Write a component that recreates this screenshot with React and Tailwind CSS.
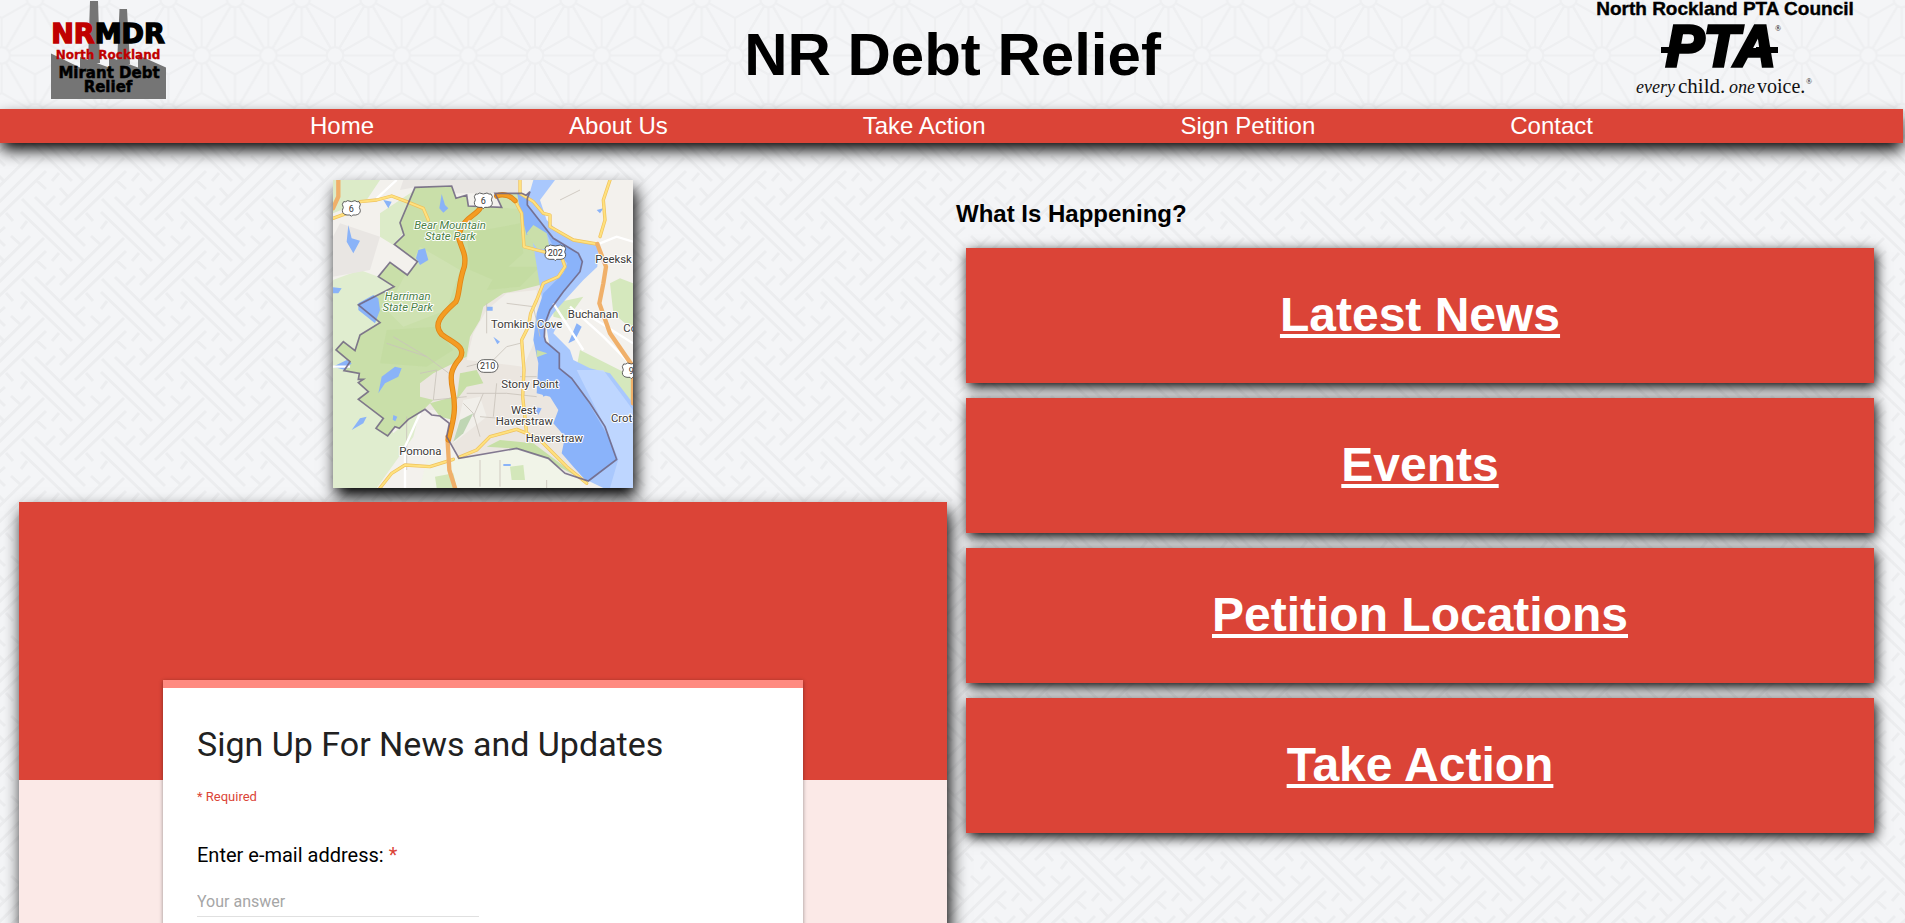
import React from "react";

const NAV_LINKS = ["Home", "About Us", "Take Action", "Sign Petition", "Contact"];
const TILES = ["Latest News", "Events", "Petition Locations", "Take Action"];

const KEY_PATH =
  "M25 17 L75 66 M36 25 L45 16 M66 55 L75 47 M12 19 L74 81 M11 32 L62 81 M17 41 L11 49 M49 73 L42 81 M50 105 L100 56 M59 98 L50 88 M90 64 L81 56 M51 120 L114 58 M65 120 L116 71 M76 113 L83 121 M107 81 L116 89";

function KeyPattern() {
  const offsets = [-80, 0];
  return (
    <svg className="absolute inset-0 -z-10 h-full w-full" aria-hidden="true">
      <defs>
        <pattern id="key" x="10" y="180" width="80" height="80" patternUnits="userSpaceOnUse">
          <g fill="none" stroke="#ecedef" strokeWidth="3">
            {offsets.map((x) =>
              offsets.map((y) => (
                <path key={`${x}/${y}`} d={KEY_PATH} transform={`translate(${x} ${y})`} />
              ))
            )}
          </g>
        </pattern>
      </defs>
      <rect width="100%" height="100%" fill="#f4f5f7" />
      <rect width="100%" height="100%" fill="url(#key)" />
    </svg>
  );
}

const STAR_PATH =
  "M0 0 H66.67 M0 0 L33.33 -56.5 M0 0 L33.33 56.5 M0 0 L-33.33 -56.5 M0 0 L-33.33 56.5 M0 0 V-38 M0 0 V38 M0 0 L33.33 -19 M0 0 L33.33 19 M0 0 L-33.33 -19 M0 0 L-33.33 19";

function StarPattern() {
  const centers = [
    [0, 56.5],
    [66.67, 56.5],
    [33.33, 0],
    [33.33, 113],
    [-33.33, 0],
    [-33.33, 113],
    [100, 0],
    [100, 113],
  ];
  return (
    <svg className="absolute inset-0 -z-10 h-full w-full" aria-hidden="true">
      <defs>
        <pattern id="star" x="1.7" y="-1" width="66.67" height="113" patternUnits="userSpaceOnUse">
          <g fill="none" stroke="#eeeff1" strokeWidth="2.2">
            {centers.map(([x, y]) => (
              <path key={`${x}/${y}`} d={STAR_PATH} transform={`translate(${x} ${y})`} />
            ))}
          </g>
          <g fill="#f4f5f7" stroke="#eeeff1" strokeWidth="2.2">
            {centers.map(([x, y]) => (
              <circle key={`${x}/${y}`} cx={x} cy={y} r="8.3" />
            ))}
          </g>
        </pattern>
      </defs>
      <rect width="100%" height="100%" fill="#f4f5f7" />
      <rect width="100%" height="100%" fill="url(#star)" />
    </svg>
  );
}

function FactoryLogo() {
  return (
    <svg
      viewBox="0 0 118 100"
      className="h-[100px] w-[118px]"
      role="img"
      aria-label="NRMDR"
      fontFamily='"DejaVu Sans", sans-serif'
      fontWeight="700"
      textAnchor="middle"
    >
      <path
        fill="#757575"
        d="M40 1h8l2 62H38z M69.500 9h7.500l3 55H67z M1 53.500L30 67.500V57L59 67.500V57L88 67.500V55L116 67.500V99H1z"
      />
      <g fontSize="27" strokeWidth="1.4">
        <text x="58" y="43">
          <tspan fill="#c00000" stroke="#c00000">NR</tspan>
          <tspan fill="#000" stroke="#000">MDR</tspan>
        </text>
      </g>
      <text x="58" y="59" fontSize="12" fill="#c00000" stroke="#c00000" strokeWidth="0.3">North Rockland</text>
      <g fill="#000" stroke="#000" strokeWidth="0.5" fontSize="15">
        <text x="59" y="78">Mirant Debt</text>
        <text x="58" y="92">Relief</text>
      </g>
    </svg>
  );
}

function PtaLogo() {
  return (
    <svg viewBox="0 0 270 100" className="h-[100px] w-[270px]" role="img" aria-label="North Rockland PTA Council">
      <text x="135" y="15" textAnchor="middle" fontFamily='"Liberation Sans", sans-serif' fontWeight="700" fontSize="19" stroke="#000" strokeWidth="0.4">
        North Rockland PTA Council
      </text>
      <text x="76" y="66" fontFamily='"Liberation Sans", sans-serif' fontWeight="700" fontStyle="italic" fontSize="57" stroke="#000" strokeWidth="3.5">
        PTA
      </text>
      <path d="M71 47h12v6H71z M166 47h22v6h-22z" />
      <g fontFamily='"Liberation Serif", serif'>
        <text x="185" y="31" fontSize="8">®</text>
        <g fill="#111">
          <text x="46" y="93" fontSize="18" fontStyle="italic">every</text>
          <text x="88" y="93" fontSize="21">child.</text>
          <text x="139" y="93" fontSize="18" fontStyle="italic">one</text>
          <text x="167" y="93" fontSize="20">voice.</text>
          <text x="216" y="84" fontSize="8">®</text>
        </g>
      </g>
    </svg>
  );
}

const BORDER =
  "M120 495L180 458L115 405L222 350L175 320L210 277L262 315L292 275L223 223L252 195L240 158L285 52L395 48L408 85L440 75L445 108L545 112L525 70L605 70L618 76L630 65L622 85V105L700 205L775 250L787 275L780 305L730 365L690 420L675 460L673 500L677 515L718 550V595L755 625L810 700L855 770L890 868L805 933L735 910L685 865L590 835L417 865L380 800L388 760L360 738L335 735L315 718L265 748L238 775L225 770L203 798L168 775L190 745L115 688L145 665L115 638L130 628H115L118 610L72 602L90 575L48 540L70 515L105 542L120 495Z";

const YELLOW_ROADS =
  "M120 95L170 90L215 78L260 95L310 115L325 150 M39 145L80 130 M585 92L605 130L612 230L650 240L690 250L725 262L735 290L715 320L670 340L650 390L632 430L625 470L605 510L612 600L608 680L620 790L660 810L740 890L800 940 M417 862L470 840L510 800L590 778L620 790 M180 954L215 910L255 885L330 890L400 868 M600 30V70L640 95L670 130L690 135V170L760 210L830 222 M870 30L850 90L855 150L840 200";

const PARKWAY =
  "M480 115C465 140 430 140 415 200C425 240 440 250 433 290C415 340 420 370 408 395C370 430 335 460 365 493C400 520 440 530 420 565C390 600 390 620 398 660C410 720 400 750 385 810 M530 78C550 68 575 80 585 92";

function Shield({ x, y, w, label }) {
  return (
    <g>
      <path
        d={`M${x - w / 2 + 4} ${y - 20}q6 2 12 -3q${w / 2 - 16} 6 ${w - 32} 0q6 5 12 3l4 8q-6 10 0 18q0 12 -14 14h-${w / 2 - 18}l-4 4l-4 -4h-${w / 2 - 18}q-14 -2 -14 -14q6 -8 0 -18z`}
        fill="#fff"
        stroke="#444"
        strokeWidth="2.500"
      />
      <text x={x} y={y + 10} textAnchor="middle" fontSize="27" fill="#333">{label}</text>
    </g>
  );
}

function CountyMap() {
  return (
    <svg
      viewBox="39 30 900 924"
      className="h-[308px] w-[300px] shadow-[3px_9px_15px_0px_#000]"
      role="img"
      aria-label="Map of North Rockland"
      fontFamily="Roboto, sans-serif"
    >
      <defs>
        <clipPath id="county"><path d={BORDER} /></clipPath>
      </defs>
      <rect x="39" y="30" width="900" height="924" fill="#f3f1ed" />
      {/* land outside the county */}
      <path fill="#e0edcf" d="M39 330L120 300L175 320L222 350L115 405L180 458L120 495V560L220 790L300 720L280 800L170 954H39z" />
      <path fill="#dcebc8" d="M39 30H180L140 90L39 130z M180 130L285 60L240 160L250 190L220 225L180 200z" />
      <path fill="#e9e6e3" d="M250 30H600V70H400L285 52L240 60z M60 160L180 200L150 300L39 320V200z" />
      <path fill="#d5e8bd" d="M870 340L900 325L939 340V480L880 430z M780 540L939 620V700L890 650L770 590z M700 400L790 380L740 450L700 440z" />
      {/* county land */}
      <g clipPath="url(#county)">
        <rect x="39" y="30" width="900" height="924" fill="#ebe6e0" />
        <path fill="#c9dfa9" d="M39 30H640V220L740 290L680 340L600 360L550 370L490 410L480 450L450 500L440 560L340 610L300 640V680L340 690L300 730L200 810H39z" />
        <path fill="#cfe2b2" d="M400 30H640V120L500 110z M300 230L420 300L380 420L250 470L200 420z" />
        <path fill="#c2db9f" opacity="0.6" d="M440 190L600 160L610 250L520 330L450 300z M200 480L350 470L400 540L320 590L180 580z M540 290L660 290L600 350L500 360z" />
        <path fill="#f1efea" d="M560 370L650 360V500L610 590L440 570L460 490L500 420z M430 690L480 680L500 740L400 820z M320 720L390 720V760z" />
        <path fill="#c7dfa6" d="M420 610L470 600L490 640L440 650L410 690z M330 700L400 680V750L360 740z M500 830L540 810L640 820L720 880L790 930L680 870L590 836z" />
        <path fill="#bfd6b4" d="M420 750L460 730L430 790L400 815z" />
      </g>
      <path fill="#f0f5e6" d="M417 866L590 838L685 868L735 912L790 935L780 954H300L320 870z" opacity="0.7" />
      <path fill="#d3e7ba" d="M570 890L610 885L615 930H575z M345 920L400 910L410 954H350z" />
      {/* river */}
      <path
        fill="#a9c8fd"
        d="M640 30H705L660 90L680 150L720 190L765 215L835 225L832 290L790 330L740 385L700 430L680 460L715 460L700 490L750 540L760 570L810 595L870 610L939 700V954H850L800 930L700 600L620 100z"
      />
      <path fill="#c8dcff" d="M770 600L850 600L939 720V954H870L895 868L855 770z" opacity="0.7" />
      <g clipPath="url(#county)">
        <path fill="#8ab3fa" d="M590 60H640L720 200L800 250L790 310L700 430L680 510L720 540V590L760 620L900 860L805 940L760 890L725 850L735 800L700 760L715 720L690 680L650 670L655 580L640 510L650 430L670 370L730 310L742 280L700 230L680 190L650 180L620 195L600 120z" />
        <path fill="#cadfaa" d="M620 190L640 165L680 190L690 240L650 235z M650 540L682 550L650 562z" />
      </g>
      {/* lakes */}
      <g fill="#8ab3f8">
        <path d="M365 72L375 105L385 115L370 128L358 115z M295 240L315 235L325 270L300 285L288 265z M160 375L175 385L180 420L165 460L115 420V400z" />
        <path d="M85 165L95 205L120 212L100 250L80 215z M185 620L225 590L245 595L235 620L195 640L175 670z M190 90L215 95L205 115z M39 590L80 570L95 580L75 600z M39 352L65 355L55 370H39z" />
        <path d="M95 780L120 745L140 740L130 760z M220 735l12 5l-6 14l-8 -5z M500 410h18v12h-18z M520 500l20 15l-8 8z M550 882h22v6h-22z M770 460L785 470L765 510L745 520z M830 120l20 -5l-10 15z M660 650l30 20l-20 10z M640 710l25 5l-10 20z" />
      </g>
      {/* minor roads */}
      <g fill="none" stroke="#c9c3bb" strokeWidth="2.500">
        <path d="M440 590L520 570L560 530L600 520 M440 670H560L650 680 M560 400L640 410L660 500 M500 400V490 M430 700L460 730L480 800 M480 740L600 750 M490 670L460 740 M350 600L340 690L440 680 M260 740V900 M200 520L320 560L400 620 M300 610L350 600 M530 640L520 740" />
        <path d="M600 620H650 M320 560L220 500 M720 90L780 60 M680 930V954 M480 870V950 M540 870V950" />
      </g>
      <g fill="none" stroke="#fff" strokeWidth="7">
        <path d="M170 85L230 30 M39 590L90 590 M300 730L255 830V954 M840 220L890 200L939 215 M750 410L850 500L939 590 M780 420L939 520 M700 400L790 540" />
      </g>
      {/* main roads */}
      <g fill="none" strokeLinejoin="round" strokeLinecap="round">
        <path stroke="#efc25d" strokeWidth="10" d={YELLOW_ROADS} />
        <path stroke="#ffe17e" strokeWidth="6" d={YELLOW_ROADS} />
        <path stroke="#f0b06a" strokeWidth="13" d="M55 30V80L39 115 M832 222L858 290L850 340L838 400L870 490L939 590V700 M382 800L388 900L405 954" />
        <path stroke="#e08516" strokeWidth="16" d={PARKWAY} />
        <path stroke="#f49c23" strokeWidth="11" d={PARKWAY} />
      </g>
      <path d={BORDER} fill="none" stroke="#6f6480" strokeWidth="5" opacity="0.85" />
      <Shield x={94} y={115} w={54} label="6" />
      <Shield x={490} y={92} w={54} label="6" />
      <Shield x={706} y={248} w={62} label="202" />
      <Shield x={934} y={602} w={54} label="9" />
      <rect x="472" y="569" width="62" height="38" rx="19" fill="#fff" stroke="#444" strokeWidth="2.500" />
      <text x="503" y="598" textAnchor="middle" fontSize="27" fill="#333">210</text>
      <g fontSize="34" stroke="#fff" strokeWidth="6" paintOrder="stroke" strokeLinejoin="round" textAnchor="middle">
        <g fill="#4b8145" fontStyle="italic">
          <text x="390" y="176">Bear Mountain</text>
          <text x="391" y="209">State Park</text>
          <text x="263" y="389">Harriman</text>
          <text x="263" y="422">State Park</text>
        </g>
        <g fill="#3c3a38">
          <text x="620" y="473">Tomkins Cove</text>
          <text x="819" y="443">Buchanan</text>
          <text x="630" y="653">Stony Point</text>
          <text x="611" y="731">West</text>
          <text x="613" y="764">Haverstraw</text>
          <text x="703" y="815">Haverstraw</text>
          <text x="301" y="855">Pomona</text>
          <g textAnchor="start">
            <text x="826" y="279">Peeksk</text>
            <text x="910" y="485">Co</text>
            <text x="873" y="756">Crot</text>
          </g>
        </g>
      </g>
    </svg>
  );
}

function SignUpForm() {
  return (
    <section className="w-full bg-[linear-gradient(#db4437_278px,#fbe9e7_278px)] px-6 pt-[178px] shadow-[3px_9px_16px_0px_#000]">
      <form
        className="mx-auto max-w-[640px] border-t-8 border-[#ff8a80] bg-white px-[34px] pt-8 pb-12 font-[Roboto,sans-serif] shadow-[0_1px_4px_rgba(0,0,0,0.4)]"
        onSubmit={(e) => e.preventDefault()}
      >
        <h2 className="text-[34px] leading-[48px] text-[#212121]">Sign Up For News and Updates</h2>
        <p className="mt-5 text-[13px] leading-[18px] text-[#db4437]">* Required</p>
        <label htmlFor="email" className="mt-[35px] block text-[20px] leading-[28px] text-black">
          Enter e-mail address: <span className="text-[#db4437]">*</span>
        </label>
        <input
          id="email"
          type="email"
          required
          placeholder="Your answer"
          className="mt-[21px] block w-[282px] max-w-full border-b border-[#e0e0e0] bg-transparent pb-0.5 text-[16px] leading-6 text-black outline-none placeholder:text-[#a6a6a6]"
        />
      </form>
    </section>
  );
}

export default function App() {
  return (
    <div className="relative isolate min-h-screen overflow-hidden font-['Liberation_Sans',Arial,sans-serif] text-black">
      <KeyPattern />
      <header className="relative isolate grid h-[109px] grid-cols-[1fr_auto_1fr] items-center">
        <StarPattern />
        <div className="self-start pl-[50px]">
          <FactoryLogo />
        </div>
        <h1 className="text-[60px] leading-none font-bold">NR Debt Relief</h1>
        <div className="flex justify-end self-start pr-[45px]">
          <PtaLogo />
        </div>
      </header>
      <nav className="relative mr-0.5 flex flex-wrap justify-center gap-x-[195px] bg-[#db4437] text-[24px] leading-[34px] text-white shadow-[0_8px_16px_-1px_#000]">
        {NAV_LINKS.map((label) => (
          <a key={label} href="#">{label}</a>
        ))}
      </nav>
      <main className="grid grid-cols-[928fr_918fr] gap-x-[9px] pt-[37px] pr-[31px] pl-[19px]">
        <div className="flex flex-col items-center gap-[14px]">
          <CountyMap />
          <SignUpForm />
        </div>
        <div className="pt-5">
          <h3 className="text-[24px] leading-7 font-bold">What Is Happening?</h3>
          <div className="mt-5 ml-2.5 flex flex-col gap-[15px]">
            {TILES.map((label) => (
              <a
                key={label}
                href="#"
                className="flex h-[135px] items-center justify-center bg-[#db4437] pb-0.5 text-[48px] font-bold text-white underline shadow-[2px_4px_12px_0px_#000]"
              >
                {label}
              </a>
            ))}
          </div>
        </div>
      </main>
    </div>
  );
}
